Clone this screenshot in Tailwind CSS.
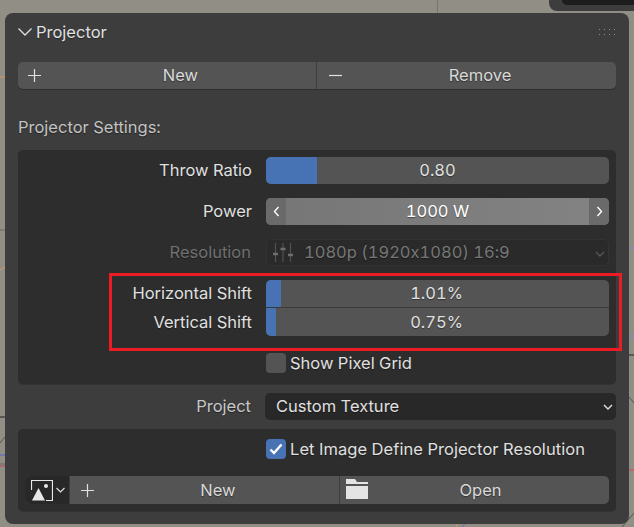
<!DOCTYPE html>
<html lang="en">
<head>
    <meta charset="UTF-8">
    <title>Projector</title>
    <script src="https://cdn.jsdelivr.net/npm/@tailwindcss/browser@4"></script>
</head>
<body class="relative w-[634px] h-[527px] overflow-hidden bg-[#918e86] font-['Inter',sans-serif] text-[16.5px] tabular-nums [font-feature-settings:'calt'_0] [text-shadow:0_1px_1px_#0006] text-[#e0e0e0]">
    <!-- viewport behind the panel -->
    <div class="absolute top-0 left-[437px] w-px h-[13px] bg-[#77756e]"></div>
    <div class="absolute top-0 right-0 w-[85px] h-[11px] bg-[#3d3d3d] rounded-bl-lg">
        <div class="ml-[13px] h-[5px] bg-[#1d1d1d] rounded-bl-md"></div>
    </div>
    <svg class="absolute inset-0" width="634" height="527" fill="none">
        <path d="M0 77h5" stroke="#d8975a"/>
        <path d="M0 230h5" stroke="#6b6963"/>
        <path d="M0 270l5-3" stroke="#d8975a"/>
        <path d="M0 417h5" stroke="#222"/>
        <path d="M0 443l5-6" stroke="#55534e"/>
        <path d="M0 455h5" stroke="#5a5ad0"/>
        <path d="M0 464h5" stroke="#6b6963"/>
        <path d="M0 466h5" stroke="#c8414a"/>
        <path d="M629 248h5" stroke="#8585c8"/>
        <path d="M629 340l5-7" stroke="#8585c8"/>
        <path d="M629 355h5" stroke="#222"/>
        <path d="M629 397l5 6M622 527l12-14" stroke="#55534e"/>
        <path d="M629 470h5" stroke="#b86a6a" stroke-width="2"/>
        <path d="M457 524v3" stroke="#d8975a"/>
        <path d="M465 524l-3 3" stroke="#6a6ac8"/>
    </svg>

    <!-- panel -->
    <div class="absolute left-[5px] top-[13px] w-[624px] h-[511px] rounded-lg bg-[#3d3d3d] px-[13px]">
        <div class="h-[38px] flex items-center">
            <svg width="14" height="8" viewBox="0 0 14 8" fill="none" stroke="#e0e0e0" stroke-width="1.3"><path d="M.5.5l6.5 6.5 6.5-6.5"/></svg>
            <span class="ml-[4px]">Projector</span>
            <svg class="ml-auto mr-[1px]" width="16" height="7" fill="#8c8c8c"><path d="M0 0h1v1H0zM5 0h1v1H5zM10 0h1v1h-1zM15 0h1v1h-1zM0 5h1v1H0zM5 5h1v1H5zM10 5h1v1h-1zM15 5h1v1h-1z"/></svg>
        </div>

        <div class="mt-[11px] flex h-[27px] rounded-[5px] bg-[#545454] shadow-[0_1px_0_#2e2e2e] text-[#d9d9d9]">
            <div class="relative w-[299px] flex items-center justify-center pl-[27px] border-r border-[#3d3d3d]">
                <svg class="absolute left-[9px]" width="15" height="15" fill="none" stroke="#e0e0e0" stroke-width="1.2"><path d="M7.5 1v13M1 7.5h13"/></svg>
                <span>New</span>
            </div>
            <div class="relative flex-1 flex items-center justify-center pl-[27px]">
                <svg class="absolute left-[11px]" width="15" height="15" fill="none" stroke="#e0e0e0" stroke-width="1.2"><path d="M1 7.5h13"/></svg>
                <span>Remove</span>
            </div>
        </div>

        <div class="mt-[27px] h-[23px] text-[#c2c2c2] leading-[23px]">Projector Settings:</div>

        <!-- settings box -->
        <div class="mt-[11px] h-[234px] rounded-[5px] bg-[#2d2d2d] shadow-[0_1px_0_#333] pt-[7px] pl-[248px] pr-[7px] relative">
            <div class="relative h-[27px] mb-[14px]">
                <span class="absolute right-[357px] top-[1px] whitespace-nowrap">Throw Ratio</span>
                <div class="h-full rounded-[5px] bg-[#545454] overflow-hidden flex items-center justify-center relative">
                    <div class="absolute left-0 inset-y-0 w-[51px] bg-[#4772b3]"></div>
                    <span class="relative">0.80</span>
                </div>
            </div>
            <div class="relative h-[27px] mb-[14px]">
                <span class="absolute right-[357px] top-[1px] whitespace-nowrap">Power</span>
                <div class="h-full rounded-[5px] bg-linear-to-r from-[#767676] to-[#838383] overflow-hidden flex items-center justify-center relative text-white">
                    <div class="absolute left-0 inset-y-0 w-[20px] bg-[#6a6a6a] flex items-center justify-center">
                        <svg width="7" height="11" fill="none" stroke="#fff" stroke-width="1.4"><path d="M5.5 1L1.5 5.5l4 4.5"/></svg>
                    </div>
                    <div class="absolute right-0 inset-y-0 w-[20px] bg-[#6a6a6a] flex items-center justify-center">
                        <svg width="7" height="11" fill="none" stroke="#fff" stroke-width="1.4"><path d="M1.5 1l4 4.5-4 4.5"/></svg>
                    </div>
                    <span class="relative">1000 W</span>
                </div>
            </div>
            <div class="relative h-[27px] mb-[14px]">
                <span class="absolute right-[358px] top-[1px] whitespace-nowrap text-[#707070]">Resolution</span>
                <div class="h-full rounded-[5px] bg-[#2a2a2a] border border-[#333] flex items-center text-[#777] relative pl-[6px]">
                    <svg width="20" height="21" fill="none" stroke="#6e6e6e" stroke-width="1.2"><path d="M2.5 1v19M10 1v19M17.5 1v19" opacity=".6"/><path d="M0 12h5M7.5 7h5M15 13h5" stroke-width="2.4"/></svg>
                    <span class="ml-[11px]">1080p (1920x1080) 16:9</span>
                    <svg class="absolute right-[3px] top-[11px]" width="10" height="6" fill="none" stroke="#555" stroke-width="1.4"><path d="M1 1l4 4 4-4"/></svg>
                </div>
            </div>
            <div class="relative h-[27px] mb-px">
                <span class="absolute right-[357px] top-[1px] whitespace-nowrap">Horizontal Shift</span>
                <div class="h-full rounded-t-[5px] bg-[#545454] shadow-[0_1px_0_#3a3a3a] overflow-hidden flex items-center justify-center relative">
                    <div class="absolute left-0 inset-y-0 w-[15px] bg-[#4772b3]"></div>
                    <span class="relative -ml-[2px]">1.01%</span>
                </div>
            </div>
            <div class="relative h-[28px] mb-[17px]">
                <span class="absolute right-[357px] top-[2px] whitespace-nowrap">Vertical Shift</span>
                <div class="h-full rounded-b-[5px] bg-[#545454] overflow-hidden flex items-center justify-center relative">
                    <div class="absolute left-0 inset-y-0 w-[10px] bg-[#4772b3]"></div>
                    <span class="relative -ml-[2px]">0.75%</span>
                </div>
            </div>
            <div class="flex items-center h-[20px]">
                <div class="w-[20px] h-[20px] rounded-[4px] bg-[#545454]"></div>
                <span class="ml-[4px]">Show Pixel Grid</span>
            </div>
        </div>

        <!-- project row -->
        <div class="relative mt-[9px] h-[27px] pl-[247px]">
            <span class="absolute right-[365px] top-[1px] whitespace-nowrap text-[#c8c8c8]">Project</span>
            <div class="relative h-full rounded-[5px] bg-[#282828] flex items-center pl-[11px]">
                <span>Custom Texture</span>
                <svg class="absolute right-[3px] top-[11px]" width="10" height="6" fill="none" stroke="#e0e0e0" stroke-width="1.4"><path d="M1 1l4 4 4-4"/></svg>
            </div>
        </div>

        <!-- image box -->
        <div class="mt-[9px] h-[82px] rounded-[5px] bg-[#2d2d2d] shadow-[0_1px_0_#333] pt-[10px] px-[7px]">
            <div class="flex items-center h-[20px] pl-[241px]">
                <div class="w-[20px] h-[20px] rounded-[4px] bg-[#4772b3] flex items-center justify-center">
                    <svg width="14" height="12" fill="none" stroke="#fff" stroke-width="2.4"><path d="M1.5 6.5l3.5 3.5 7.5-8.5"/></svg>
                </div>
                <span class="ml-[4px] whitespace-nowrap tracking-[0.05px]">Let Image Define Projector Resolution</span>
            </div>
            <div class="mt-[17px] flex h-[28px] rounded-[5px] overflow-hidden bg-[#545454] text-[#d9d9d9]">
                <div class="w-[45px] bg-[#282828] flex items-center pl-[6px] gap-[3px] border-r border-[#3d3d3d]">
                    <svg width="22" height="21" fill="none"><path d="M.5 10V.5h21v20H15" stroke="#e8e8e8" stroke-width="1.2"/><path d="M1 20.5L7.5 8 14 20.5z" fill="#e8e8e8"/><circle cx="15" cy="6" r="2" fill="#e8e8e8"/></svg>
                    <svg width="9" height="6" fill="none" stroke="#e0e0e0" stroke-width="1.2"><path d="M.5 1l4 4 4-4"/></svg>
                </div>
                <div class="relative w-[270px] flex items-center justify-center pl-[27px] border-r border-[#3d3d3d]">
                    <svg class="absolute left-[10px]" width="15" height="15" fill="none" stroke="#e0e0e0" stroke-width="1.2"><path d="M7.5 1v13M1 7.5h13"/></svg>
                    <span>New</span>
                </div>
                <div class="relative flex-1 flex items-center justify-center pl-[12px]">
                    <svg class="absolute left-[6px] top-[3px]" width="22" height="20" fill="#e4e4e4"><path d="M0 0h9l2 3h11v2H0zM0 7h22v13H0z"/></svg>
                    <span>Open</span>
                </div>
            </div>
        </div>
    </div>

    <!-- red annotation -->
    <div class="absolute left-[109px] top-[273px] w-[513px] h-[78px] border-[3px] border-[#ed1c24]"></div>
</body>
</html>
